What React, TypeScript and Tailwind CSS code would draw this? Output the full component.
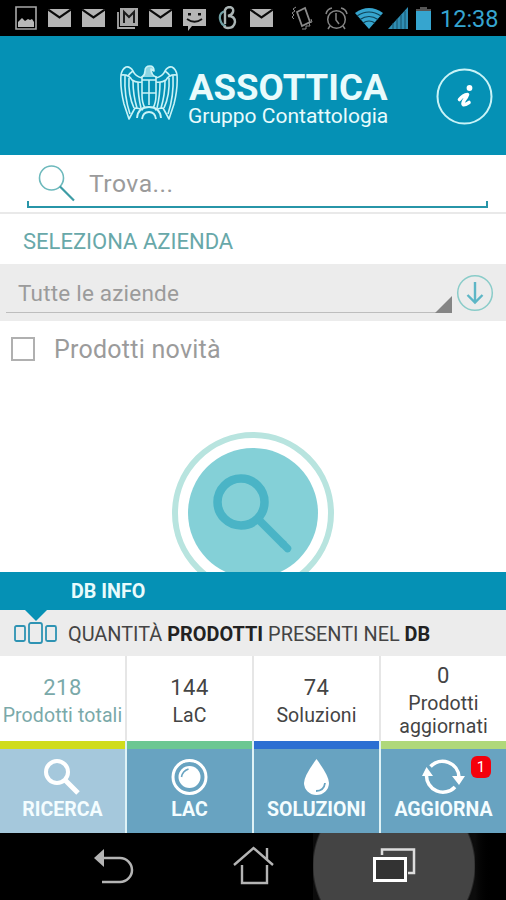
import React from "react";

const Mail = ({ className = "" }: { className?: string }) => (
  <svg className={`shrink-0 ${className}`} width="23" height="18" viewBox="0 0 23 18">
    <path d="M0 0h23v18H0z" fill="#b5b5b5" />
    <path d="M0 0.5L11.5 8.5L23 0.5" fill="none" stroke="#0a0a0a" strokeWidth="2.2" />
  </svg>
);

const StatusBar = () => (
  <div className="flex h-9 items-center bg-black">
    <svg className="ml-[15px] shrink-0" width="22" height="24" viewBox="0 0 22 24">
      <path d="M1 1h20v22H1z" fill="none" stroke="#a8a8a8" strokeWidth="1.6" />
      <path d="M3 21v-5l4-4 3 3 3-2 2 1 2-1 2 3v5z" fill="#b9b9b9" />
    </svg>
    <Mail className="ml-[11px]" />
    <Mail className="ml-[11px]" />
    <svg className="ml-3 shrink-0" width="21" height="21" viewBox="0 0 21 21">
      <path d="M1 4v16h17" fill="none" stroke="#a8a8a8" strokeWidth="1.8" />
      <path d="M3 0h18v18H3z" fill="#a8a8a8" />
      <path d="M7 15V4l5 5 5-5v11" fill="none" stroke="#1c1c1c" strokeWidth="2" />
    </svg>
    <Mail className="ml-[11px]" />
    <svg className="ml-[11px] mt-1 shrink-0" width="23" height="22" viewBox="0 0 23 22">
      <path d="M0 0h23v17H9l-4 5v-5H0z" fill="#b5b5b5" />
      <path d="M5 4h3v2.500H5zM15 4h3v2.500h-3z" fill="#111" />
      <path d="M4 10q7.500 5.500 15 0" fill="none" stroke="#111" strokeWidth="1.8" />
    </svg>
    <svg className="ml-3 shrink-0" width="19" height="24" viewBox="0 0 19 24">
      <path d="M7 5Q1 7 2 13t6 7" fill="none" stroke="#6fa0a4" strokeWidth="2.200" />
      <path d="M7 18V4q1-3 5-3 4 1 3 5-1 3-5 4 7 0 7 6-1 6-7 6-3 0-4-2" fill="none" stroke="#aab4b4" strokeWidth="2.400" />
    </svg>
    <Mail className="ml-[13px]" />
    <svg className="ml-[18px] shrink-0" width="22" height="24" viewBox="0 0 22 24" fill="none" stroke="#8a8a8a">
      <path d="M6 6l8-4 5 14-8 4z" strokeWidth="1.800" />
      <path d="M5 1L2 3l2 2-3 2 2 2-2 2 2 2M20 13l1 3-3 1 1 3-4 0 0 3-4 0" strokeWidth="1" />
    </svg>
    <svg className="ml-3 shrink-0" width="23" height="23" viewBox="0 0 23 23" fill="none" stroke="#858585" strokeWidth="1.500">
      <circle cx="11.500" cy="12.500" r="8.800" />
      <path d="M11 6v7l3 4M1 7q1-5 6-6M22 7q-1-5-6-6M5 19l-2 3M18 19l2 3" />
    </svg>
    <svg className="ml-[7px] shrink-0" width="28" height="21" viewBox="0 0 28 21">
      <path d="M0 5q14-10 28 0L14 21z" fill="#36a5cf" />
      <path d="M2 8q12-8 24 0M5 11.500q9-6 18 0M8 15q6-4 12 0" fill="none" stroke="#0f4256" strokeWidth="1.200" />
    </svg>
    <svg className="ml-[5px] shrink-0" width="20" height="22" viewBox="0 0 20 22">
      <path d="M20 0v22H0z" fill="#2f8db3" />
      <path d="M5 16v6M9 12v10M13 8v14M17 4v18" stroke="#17536b" strokeWidth="1" />
    </svg>
    <svg className="ml-2 shrink-0" width="15" height="23" viewBox="0 0 15 23">
      <path d="M4 0h7v2h4v3H0V2h4z" fill="#555" />
      <path d="M0 4h15v19H0z" fill="#36a5cf" />
    </svg>
    <span className="ml-[9px] mt-0.5 whitespace-nowrap text-[23.500px] leading-9 text-[#36a5cf]">12:38</span>
  </div>
);

// one wing, drawn again mirrored for the right side
const Wing = () => (
  <>
    <path d="M22 13Q15 11 13 6 10 1 6 2 2 4 1 10q-1 13 3 29l5 15 6-11q4 0 8 2" />
    <path d="M1 10q8-1 11 5 4 3 10 2M13 6q-3 2-5 5" />
    <path d="M5 11q-1 20 5 38M9 13q-1 17 5 30M13 16q0 14 4 27M18 17q0 14 3 26" />
    <path d="M22 11v19q0 8 3 13" />
  </>
);

const Eagle = () => (
  <svg className="ml-[120px] mt-[29px] shrink-0" width="58" height="56" viewBox="0 0 58 56" fill="none" stroke="#c9f3f7" strokeWidth="1.600" strokeLinejoin="round">
    <Wing />
    <g transform="translate(58 0) scale(-1 1)">
      <Wing />
    </g>
    <path d="M22 12q3-2 3-6 0-5 5-5 4 0 4 5l-3-2q0 6 5 8" fill="#c9f3f7" fillOpacity="0.7" />
    <path d="M22 15h14M22 28h14M29 15v25" />
    <path d="M17 53q1-11 12-11t12 11M22 54q1-7 7-7t7 7" strokeWidth="1.900" />
  </svg>
);

const Header = () => (
  <div className="flex h-[119px] bg-[#0591b5]">
    <Eagle />
    <div className="ml-[11px] mt-8 w-[207px] shrink-0 whitespace-nowrap text-[#e9fbfc]">
      <div className="text-[36.600px] font-bold leading-[39px]">ASSOTTICA</div>
      <div className="-ml-px text-[21px] leading-[18px]">Gruppo Contattologia</div>
    </div>
    <svg className="ml-10 mt-8 shrink-0" width="58" height="58" viewBox="0 0 58 58">
      <circle cx="28.500" cy="28.500" r="27" fill="none" stroke="#c9f3f7" strokeWidth="2" />
      <path d="M23.500 31.500Q27 27 31.500 26.500q-0.500 2-3.500 6-3.500 7.500 5 2" fill="none" stroke="#fff" strokeWidth="3.600" strokeLinecap="round" strokeLinejoin="round" />
      <circle cx="33.500" cy="20" r="2.900" fill="#fff" />
    </svg>
  </div>
);

const Search = () => (
  <div className="h-[59px] border-b-2 border-[#e9e9e9] bg-white pl-[27px] pt-2">
    <div className="flex h-[38px] items-center">
      <svg className="ml-[11px] mt-1 shrink-0" width="38" height="38" viewBox="0 0 38 38" fill="none">
        <circle cx="13.500" cy="13" r="12" stroke="#6db9bc" strokeWidth="1.600" />
        <path d="M22 21.500l14 14" stroke="#3d9ca5" strokeWidth="2.200" />
      </svg>
      <span className="ml-[13px] mt-1 text-[24.700px] tracking-[0.5px] text-[#9b9b9b]">Trova...</span>
    </div>
    <div className="h-[7px] w-[461px] border-x-2 border-b-2 border-[#2795a8]" />
  </div>
);

const Company = () => (
  <>
    <div className="h-[50px] bg-white pl-[23px] pt-[13px] text-[22px] leading-[30px] text-[#68a8a9]">
      <span className="whitespace-nowrap">SELEZIONA AZIENDA</span>
    </div>
    <div className="flex h-[57px] bg-[#ececec]">
      <div className="ml-[6px] flex h-[49px] w-[446px] justify-between border-b border-[#bdbdbd]">
        <span className="ml-3 mt-[14px] text-[22.500px] leading-[30px] tracking-[0.2px] text-[#9b9b9b]">Tutte le aziende</span>
        <svg className="mt-8" width="17" height="17" viewBox="0 0 17 17">
          <path d="M17 0v17H0z" fill="#858585" />
        </svg>
      </div>
      <svg className="ml-1 mt-2.5" width="38" height="38" viewBox="0 0 38 38" fill="none">
        <circle cx="19" cy="19" r="17.300" stroke="#8accc9" strokeWidth="1.500" />
        <path d="M19 8v20M11.500 21l7.500 7.500 7.500-7.500" stroke="#5db6c6" strokeWidth="2.400" />
      </svg>
    </div>
    <div className="flex h-[57px] items-center bg-white">
      <div className="ml-[11px] -mt-0.5 h-6 w-6 border-2 border-[#b0b0b0]" />
      <span className="ml-[19px] text-[25px] tracking-[0.25px] text-[#9b9b9b]">Prodotti novità</span>
    </div>
  </>
);

const BigSearch = () => (
  <div className="flex h-[194px] justify-center overflow-hidden bg-white pt-[52px]">
    <svg className="shrink-0" width="164" height="164" viewBox="0 0 164 164" fill="none">
      <circle cx="82" cy="83" r="78" stroke="#b8e4df" strokeWidth="6" />
      <circle cx="82" cy="83" r="65" fill="#84d0d7" />
      <circle cx="70" cy="72" r="23.500" stroke="#4ab4c6" strokeWidth="8.500" />
      <path d="M87 89l26 26" stroke="#4ab4c6" strokeWidth="8" />
      <path d="M112 114l4.500 4.500" stroke="#4ab4c6" strokeWidth="7.500" strokeLinecap="round" />
    </svg>
  </div>
);

const DbInfo = () => (
  <>
    <div className="h-[38px] bg-[#0591b5] pl-[71px] text-[19.700px] font-bold leading-[40px] text-[#e9fbfc]">
      <span>DB INFO</span>
    </div>
    <div className="relative flex h-[46px] items-center bg-[#ececec]">
      <svg className="absolute left-[25px] top-0" width="22" height="11" viewBox="0 0 22 11">
        <path d="M0 0h22L11 11z" fill="#0591b5" />
      </svg>
      <svg className="ml-[14px] shrink-0" width="43" height="22" viewBox="0 0 43 22" fill="none" stroke="#2e93b3" strokeWidth="1.800">
        <rect x="1" y="4" width="10" height="15" rx="1.500" />
        <rect x="15" y="1" width="13" height="20" rx="2" />
        <rect x="32" y="4" width="10" height="15" rx="1.500" />
      </svg>
      <span className="ml-[11px] mt-[3px] whitespace-nowrap text-[19.900px] text-[#444]">
        QUANTITÀ <b className="text-[#222]">PRODOTTI</b> PRESENTI NEL <b className="text-[#222]">DB</b>
      </span>
    </div>
  </>
);

const stats = [
  { value: "218", label: "Prodotti totali", color: "text-[#7aa9a9]" },
  { value: "144", label: "LaC", color: "text-[#444]" },
  { value: "74", label: "Soluzioni", color: "text-[#444]" },
  { value: "0", label: "Prodotti aggiornati", color: "text-[#444]" },
];

const Stats = () => (
  <div className="grid h-[85px] grid-cols-[125px_125px_125px_125px] gap-x-0.5 bg-[#e6e6e6]">
    {stats.map((s) => (
      <div key={s.label} className={`flex flex-col items-center justify-center bg-white pt-0.5 text-center ${s.color}`}>
        <div className="text-[22px] leading-[30px] tracking-[0.5px]">{s.value}</div>
        <div className="pt-px text-[19.500px] leading-[23px] tracking-[0.1px]">{s.label}</div>
      </div>
    ))}
  </div>
);

const tabs = [
  {
    name: "RICERCA",
    box: "border-[#d0dc1c] bg-[#a5c8dc]",
    icon: (
      <>
        <circle cx="16" cy="14" r="11" strokeWidth="4" />
        <path d="M24 22l13 13" strokeWidth="5" />
      </>
    ),
  },
  {
    name: "LAC",
    box: "border-[#6cc792] bg-[#68a3c1]",
    icon: (
      <>
        <circle cx="21.500" cy="19" r="16.500" strokeWidth="3" />
        <circle cx="21.500" cy="19" r="11" fill="#fff" stroke="none" />
        <path d="M13.500 19q1-6 7-8" stroke="#68a3c1" strokeWidth="1.600" />
      </>
    ),
  },
  {
    name: "SOLUZIONI",
    box: "border-[#2c6fd2] bg-[#68a3c1]",
    icon: (
      <>
        <path d="M21.500 1Q9 18 9 25a12.500 12 0 0 0 25 0Q34 18 21.500 1z" fill="#fff" stroke="none" />
        <path d="M21 33q8 0 9-8" stroke="#68a3c1" strokeWidth="1.800" />
      </>
    ),
  },
  {
    name: "AGGIORNA",
    box: "border-[#afd87a] bg-[#68a3c1]",
    icon: (
      <>
        <path d="M8.500 8.500A16.500 16.500 0 0 1 37 19M33 29A16.500 16.500 0 0 1 4.500 17" strokeWidth="3.500" />
        <path d="M30 18h13l-6 9zM0 18h11l-6.500-9z" fill="#fff" stroke="none" />
      </>
    ),
  },
];

const Tabs = () => (
  <div className="grid h-[92px] grid-cols-[125px_125px_125px_125px] gap-x-0.5 bg-[#def2f6]">
    {tabs.map((t) => (
      <div key={t.name} className={`relative flex flex-col items-center border-t-8 ${t.box}`}>
        <svg className="mt-[9px]" width="44" height="38" viewBox="0 0 44 38" fill="none" stroke="#fff">
          {t.icon}
        </svg>
        <div className="text-[19.500px] font-bold leading-[28px] text-[#f4fdff]">{t.name}</div>
        {t.name === "AGGIORNA" && (
          <div className="absolute right-[15px] top-[7px] flex h-[22px] w-5 items-center justify-center rounded-md bg-[#f5000c] text-[15px] text-white">
            1
          </div>
        )}
      </div>
    ))}
  </div>
);

const NavBar = () => (
  <div className="flex h-[67px] overflow-hidden bg-black">
    <svg className="ml-[94px] mt-[15px] shrink-0" width="40" height="37" viewBox="0 0 40 37" fill="none">
      <path d="M9 10h17a12 12 0 0 1 0 24H8" stroke="#b4b4b4" strokeWidth="2.500" />
      <path d="M0 10L10 1v18z" fill="#b4b4b4" />
    </svg>
    <svg className="ml-[99px] mt-3 shrink-0" width="42" height="40" viewBox="0 0 42 40" fill="none" stroke="#b4b4b4" strokeWidth="2.400">
      <path d="M1 20L20.500 3 40 20M9 20v18h25V20M34 14V3" />
    </svg>
    <div className="ml-[38px] flex h-[67px] w-[162px] shrink-0 justify-center overflow-hidden bg-[radial-gradient(circle_at_50%_33px,#444_80px,#0c0c0c_82px)]">
      <svg className="mt-[14px]" width="43" height="38" viewBox="0 0 43 38" fill="none" stroke="#fff" strokeWidth="3">
        <path d="M9 8V2.500h32V26h-6" stroke="#ddd" strokeWidth="2.500" />
        <path d="M1.500 11.500h31v22h-31z" fill="#333" />
      </svg>
    </div>
    <div className="h-full grow bg-linear-to-r from-[#0c0c0c] to-black to-60%" />
  </div>
);

const App = () => {
  return (
    <div className="h-[900px] w-[506px] overflow-hidden bg-white font-['Roboto',sans-serif]">
      <StatusBar />
      <Header />
      <Search />
      <Company />
      <BigSearch />
      <DbInfo />
      <Stats />
      <Tabs />
      <NavBar />
    </div>
  );
};

export default App;
